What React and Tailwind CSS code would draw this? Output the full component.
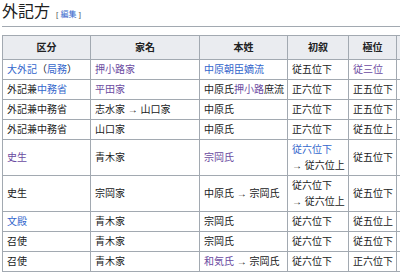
import React from 'react';

const A = ({ v, children }) => (
  <a className={v ? 'text-[#6b4ba1]' : 'text-[#3366cc]'}>{children}</a>
);

const rows = [
  {
    kubun: (<><A>大外記</A>（<A>局務</A>）</>),
    ie: <A v>押小路家</A>,
    sei: <A>中原朝臣嫡流</A>,
    sho: '従五位下',
    kyoku: <A v>従三位</A>,
  },
  {
    kubun: (<>外記兼<A>中務省</A></>),
    ie: <A v>平田家</A>,
    sei: (<>中原氏<A v>押小路</A>庶流</>),
    sho: '正六位下',
    kyoku: '正五位下',
  },
  { kubun: '外記兼中務省', ie: '志水家 → 山口家', sei: '中原氏', sho: '正六位下', kyoku: '正五位下' },
  { kubun: '外記兼中務省', ie: '山口家', sei: '中原氏', sho: '正六位下', kyoku: '従五位上' },
  {
    kubun: <A v>史生</A>,
    ie: '青木家',
    sei: <A v>宗岡氏</A>,
    sho: (<><A>従六位下</A><br />→ 従六位上</>),
    kyoku: '従五位下',
  },
  {
    kubun: '史生',
    ie: '宗岡家',
    sei: '中原氏 → 宗岡氏',
    sho: (<>従六位下<br />→ 従六位上</>),
    kyoku: '従五位下',
  },
  { kubun: <A>文殿</A>, ie: '青木家', sei: '宗岡氏', sho: '従六位下', kyoku: '従五位上' },
  { kubun: '召使', ie: '青木家', sei: '宗岡氏', sho: '従六位下', kyoku: '従五位下' },
  {
    kubun: '召使',
    ie: '青木家',
    sei: (<><A v>和気氏</A> → 宗岡氏</>),
    sho: '従六位下',
    kyoku: '正六位下',
  },
];

const th = 'border border-[#a2a9b1] bg-[#eaecf0] px-[4px] py-[3.5px] text-center font-bold leading-[16px]';
const td = 'border border-[#a2a9b1] px-[4px] py-[1.5px] leading-[16px] align-middle whitespace-nowrap';

export default function App() {
  return (
    <div className="w-[400px] h-[272px] overflow-hidden bg-white pl-[2px] text-[#202122] font-['Liberation_Sans','Noto_Sans_CJK_JP',sans-serif]">
      <h2 className="flex items-baseline border-b border-[#a2a9b1] pt-[1px] text-[16px] leading-[22px] font-normal">
        <span>外記方</span>
        <span className="ml-[6px] text-[8px] text-[#54595d]">
          [ <A>編集</A> ]
        </span>
      </h2>

      <table className="mt-[8px] table-fixed border-collapse text-[10px] w-[454px]">
        <colgroup>
          <col className="w-[88px]" />
          <col className="w-[109px]" />
          <col className="w-[88px]" />
          <col className="w-[61px]" />
          <col className="w-[48px]" />
          <col className="w-[60px]" />
        </colgroup>
        <thead>
          <tr>
            <th className={th}>区分</th>
            <th className={th}>家名</th>
            <th className={th}>本姓</th>
            <th className={th}>初叙</th>
            <th className={th}>極位</th>
            <th className={th}></th>
          </tr>
        </thead>
        <tbody>
          {rows.map((r, i) => (
            <tr key={i}>
              <td className={td}>{r.kubun}</td>
              <td className={td}>{r.ie}</td>
              <td className={td}>{r.sei}</td>
              <td className={td}>{r.sho}</td>
              <td className={td}>{r.kyoku}</td>
              <td className={td}></td>
            </tr>
          ))}
        </tbody>
      </table>
    </div>
  );
}
